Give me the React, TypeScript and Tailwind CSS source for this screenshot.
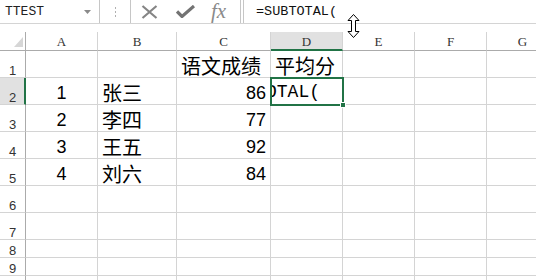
import React from "react";

const cols = [
  { k: "A", w: "w-[72px]" },
  { k: "B", w: "w-[79px]" },
  { k: "C", w: "w-[94px]" },
  { k: "D", w: "w-[72px]" },
  { k: "E", w: "w-[72px]" },
  { k: "F", w: "w-[72px]" },
  { k: "G", w: "w-[72px]" },
];

type Cell = { t: string; kind: "num" | "numR" | "cjk" };

const rows: { n: number; h: string; cells: Record<string, Cell> }[] = [
  { n: 1, h: "h-[27px]", cells: { C: { t: "语文成绩", kind: "cjk" }, D: { t: "平均分", kind: "cjk" } } },
  { n: 2, h: "h-[27px]", cells: { A: { t: "1", kind: "num" }, B: { t: "张三", kind: "cjk" }, C: { t: "86", kind: "numR" } } },
  { n: 3, h: "h-[27px]", cells: { A: { t: "2", kind: "num" }, B: { t: "李四", kind: "cjk" }, C: { t: "77", kind: "numR" } } },
  { n: 4, h: "h-[27px]", cells: { A: { t: "3", kind: "num" }, B: { t: "王五", kind: "cjk" }, C: { t: "92", kind: "numR" } } },
  { n: 5, h: "h-[27px]", cells: { A: { t: "4", kind: "num" }, B: { t: "刘六", kind: "cjk" }, C: { t: "84", kind: "numR" } } },
  { n: 6, h: "h-[27px]", cells: {} },
  { n: 7, h: "h-[27px]", cells: {} },
  { n: 8, h: "h-[18px]", cells: {} },
  { n: 9, h: "h-[18px]", cells: {} },
  { n: 10, h: "h-[18px]", cells: {} },
];

function Toolbar() {
  return (
    <div className="flex h-[24px] border-b border-[#d4d4d4]">
      <div className="flex w-[100px] items-center justify-between border-r border-[#c6c6c6] pl-[5px] pr-[8px]">
        <span className="font-['Liberation_Mono'] text-[13px] leading-none text-[#222]">TTEST</span>
        <svg width="7" height="4" viewBox="0 0 7 4">
          <path d="M0 0h7L3.5 4z" fill="#8a8a8a" />
        </svg>
      </div>
      <div className="flex w-[30px] flex-col items-center justify-center gap-[2px]">
        <div className="h-[2px] w-[1px] bg-[#b0b0b0]" />
        <div className="h-[2px] w-[1px] bg-[#b0b0b0]" />
        <div className="h-[2px] w-[1px] bg-[#b0b0b0]" />
      </div>
      <div className="flex w-[111px] items-center border-x border-[#c6c6c6] pl-[10px]">
        <svg width="17" height="14" viewBox="0 0 17 14">
          <path d="M1.5 1l14 12M15.5 1l-14 12" stroke="#858585" strokeWidth="2.2" fill="none" />
        </svg>
        <svg className="ml-[18px]" width="19" height="13" viewBox="0 0 19 13">
          <path d="M1 6.5l5 5L18 1" stroke="#737373" strokeWidth="3.2" fill="none" />
        </svg>
        <span className="ml-[16px] font-['Liberation_Serif'] text-[21px] italic leading-none text-[#8a8a8a]">fx</span>
      </div>
      <div className="w-[2px]" />
      <div className="flex flex-1 items-center border-l border-[#c6c6c6] pl-[12px]">
        <span className="font-['Liberation_Mono'] text-[13.5px] leading-none text-[#111]">=SUBTOTAL(</span>
      </div>
    </div>
  );
}

function CellText({ c }: { c: Cell }) {
  if (c.kind === "cjk")
    return (
      <div className="flex h-full items-end pb-[1px] pl-[4px]">
        <span className="whitespace-nowrap font-['Noto_Sans_CJK_SC',sans-serif] text-[20px] leading-none">{c.t}</span>
      </div>
    );
  return (
    <div className={c.kind === "num" ? "flex h-full items-end justify-center pb-[2px]" : "flex h-full items-end justify-end pb-[2px] pr-[4px]"}>
      <span className="font-['Liberation_Sans',sans-serif] text-[18px] leading-none">{c.t}</span>
    </div>
  );
}

function Sheet() {
  return (
    <div className="flex flex-col">
      <div className="flex h-[19px]">
        <div className="relative w-[26px] shrink-0 border-r border-b border-[#ababab]">
          <svg className="absolute left-[14px] top-[5px]" width="9" height="10" viewBox="0 0 9 10">
            <path d="M9 0v10H0z" fill="#d6d6d6" />
          </svg>
        </div>
        {cols.map((c) => (
          <div
            key={c.k}
            className={
              c.k === "D"
                ? `${c.w} flex shrink-0 items-end justify-center border-r border-[#d4d4d4] border-b-2 border-b-[#217346] bg-[#e1e1e1] pb-[1px]`
                : `${c.w} flex shrink-0 items-end justify-center border-r border-[#d4d4d4] border-b border-b-[#ababab] pb-[2px]`
            }
          >
            <span className="font-['Liberation_Serif',serif] text-[13px] leading-none text-[#333]">{c.k}</span>
          </div>
        ))}
      </div>
      {rows.map((r) => (
        <div key={r.n} className={`flex ${r.h}`}>
          <div
            className={
              r.n === 2
                ? "flex w-[26px] shrink-0 items-end justify-center border-r-2 border-b border-r-[#217346] border-b-[#d4d4d4] bg-[#e1e1e1] pl-[1px]"
                : "flex w-[26px] shrink-0 items-end justify-center border-r border-b border-r-[#ababab] border-b-[#d4d4d4]"
            }
          >
            <span className="font-['Liberation_Sans',sans-serif] text-[13px] leading-none text-[#333]">{r.n}</span>
          </div>
          {cols.map((c) => {
            const cell = r.cells[c.k];
            const active = r.n === 2 && c.k === "D";
            return (
              <div key={c.k} className={`${c.w} relative shrink-0 border-r border-b border-[#d4d4d4]`}>
                {cell && <CellText c={cell} />}
                {active && (
                  <>
                    <div className="flex h-full items-end overflow-hidden pb-[3px]">
                      <span className="ml-[-59px] whitespace-nowrap font-['Liberation_Mono'] text-[18px] leading-none">=SUBTOTAL(</span>
                    </div>
                    <div className="absolute -left-[1px] -top-[1px] z-10 h-[29px] w-[74px] border-2 border-[#217346]">
                      <div className="absolute -bottom-[4px] -right-[4px] h-[6px] w-[6px] border border-white bg-[#217346]" />
                    </div>
                  </>
                )}
              </div>
            );
          })}
        </div>
      ))}
    </div>
  );
}

function ResizeCursor() {
  return (
    <svg className="absolute left-[347px] top-[14px] z-20" width="13" height="24" viewBox="0 0 13 24">
      <path
        d="M6.5 0.5L12 6.5H8.5V17.5H12L6.5 23.5L1 17.5H4.5V6.5H1Z"
        fill="white"
        stroke="black"
        strokeWidth="1"
        strokeLinejoin="miter"
      />
    </svg>
  );
}

export default function App() {
  return (
    <div className="relative h-[280px] w-[536px] overflow-hidden bg-white text-black">
      <Toolbar />
      <div className="h-[8px]" />
      <Sheet />
      <ResizeCursor />
    </div>
  );
}
